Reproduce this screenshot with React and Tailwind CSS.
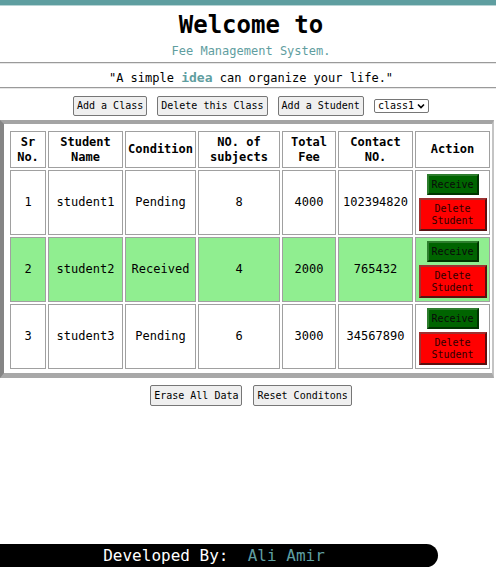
const students = [
  { sr: 1, name: "student1", condition: "Pending", subjects: 8, fee: 4000, contact: "102394820" },
  { sr: 2, name: "student2", condition: "Received", subjects: 4, fee: 2000, contact: "765432" },
  { sr: 3, name: "student3", condition: "Pending", subjects: 6, fee: 3000, contact: "34567890" },
];

const mono = "font-['DejaVu_Sans_Mono',monospace]";
const btn =
  "h-[20px] rounded-[2px] border border-[#767676] bg-[#efefef] px-[3px] text-[10px] leading-none text-black";
const cell = "border border-[#a0a0a0] px-[2px] text-center align-middle";

export default function App() {
  return (
    <div className={`flex min-h-[567px] flex-col bg-white text-black ${mono}`}>
      <div className="h-[5px] bg-[#5f9ea0]" />
      <div className="h-px bg-[#b8d4d5]" />

      <div className="pl-[6px] text-center">
        <h1 className="mt-[5px] text-[24px] font-bold leading-[28px]">Welcome to</h1>
        <p className="mt-[5px] text-[12px] leading-[14px] text-[#5f9ea0]">
          Fee Management System.
        </p>
      </div>

      <hr className="mt-[4px] border-t border-b border-t-[#9a9a9a] border-b-[#e6e6e6]" />

      <p className="mt-[7px] pl-[6px] text-center text-[12px] leading-[14px]">
        "A simple <b className="text-[13px] text-[#5f9ea0]">idea</b> can organize your life."
      </p>

      <hr className="mt-[2px] border-t border-b border-t-[#9a9a9a] border-b-[#e6e6e6]" />

      <div className="mt-[7px] flex items-center justify-center gap-[10px] pl-[6px]">
        <button className={btn}>Add a Class</button>
        <button className={btn}>Delete this Class</button>
        <button className={btn}>Add a Student</button>
        <div className="flex h-[14px] items-center gap-[3px] rounded-[2px] border border-[#767676] px-[3px] text-[10px] leading-none">
          <span>class1</span>
          <svg width="8" height="6" viewBox="0 0 8 6" fill="none">
            <path d="M1 1.5 4 4.5 7 1.5" stroke="#000" strokeWidth="1.6" />
          </svg>
        </div>
      </div>

      <div className="mt-[4px] w-[494px] border-t-4 border-r-2 border-b-[5px] border-l-4 border-t-[#a4a4a4] border-r-[#c4c4c4] border-b-[#a8a8a8] border-l-[#858585] pt-[5px] pb-[2px] pl-[4px]">
        <table className="w-[484px] table-fixed border-separate border-spacing-[2px] text-[12px] leading-[15px]">
          <thead>
            <tr>
              <th className={`${cell} h-[37px] w-[36px]`}>Sr<br />No.</th>
              <th className={`${cell} w-[75px]`}>Student<br />Name</th>
              <th className={`${cell} w-[71px]`}>Condition</th>
              <th className={`${cell} w-[82px]`}>NO. of<br />subjects</th>
              <th className={`${cell} w-[54px]`}>Total<br />Fee</th>
              <th className={`${cell} w-[75px]`}>Contact<br />NO.</th>
              <th className={`${cell} w-[75px]`}>Action</th>
            </tr>
          </thead>
          <tbody>
            {students.map((s) => {
              const bg = s.condition === "Received" ? "bg-[#90ee90]" : "bg-white";
              return (
                <tr key={s.sr}>
                  <td className={`${cell} ${bg}`}>{s.sr}</td>
                  <td className={`${cell} ${bg}`}>{s.name}</td>
                  <td className={`${cell} ${bg}`}>{s.condition}</td>
                  <td className={`${cell} ${bg}`}>{s.subjects}</td>
                  <td className={`${cell} ${bg}`}>{s.fee}</td>
                  <td className={`${cell} ${bg}`}>{s.contact}</td>
                  <td className={`${cell} ${bg} py-[3px]`}>
                    <div className="flex flex-col items-center gap-[3px]">
                      <button className="h-[21px] w-[52px] border-2 border-t-[#2e7d2e] border-l-[#2e7d2e] border-r-[#003300] border-b-[#003300] bg-[#006400] text-[10px] leading-none text-[#0a0a0a]">
                        Receive
                      </button>
                      <button className="h-[33px] w-[68px] border-2 border-t-[#a03030] border-l-[#a03030] border-r-[#5a1010] border-b-[#5a1010] bg-[#ff0000] text-[10px] leading-[12px] text-[#300000]">
                        Delete<br />Student
                      </button>
                    </div>
                  </td>
                </tr>
              );
            })}
          </tbody>
        </table>
      </div>

      <div className="mt-[7px] flex justify-center gap-[11px] pl-[6px]">
        <button className={`${btn} h-[21px]`}>Erase All Data</button>
        <button className={`${btn} h-[21px]`}>Reset Conditons</button>
      </div>

      <footer className="mt-auto flex h-[23px] w-[438px] items-center justify-center rounded-r-[12px] bg-black pr-[10px] text-[16px] leading-[23px] whitespace-pre">
        <span className="text-white">Developed By:  </span>
        <span className="text-[#5f9ea0]">Ali Amir</span>
      </footer>
    </div>
  );
}
